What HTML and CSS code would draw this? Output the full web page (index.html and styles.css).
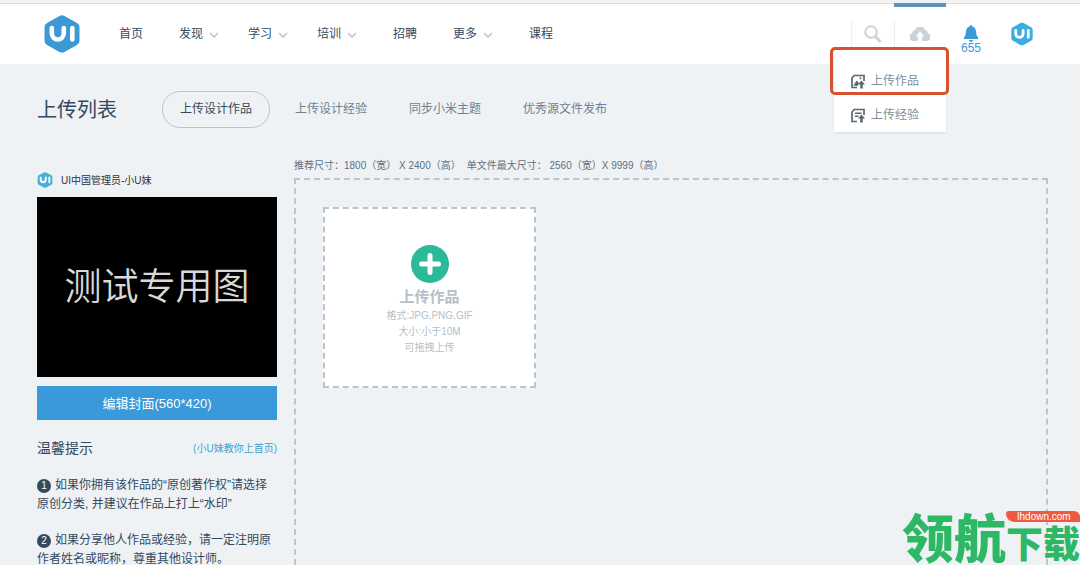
FILE: index.html
```html
<!DOCTYPE html>
<html lang="zh-CN">
<head>
<meta charset="utf-8">
<title>上传列表</title>
<link rel="stylesheet" href="styles.css">
</head>
<body>
<svg class="defs" aria-hidden="true">
  <symbol id="logo" viewBox="0 0 36 38">
    <path d="M15.500 1Q18 -.4 20.500 1L33 8Q35.500 9.400 35.500 12V26Q35.500 28.600 33 30L20.500 37Q18 38.400 15.500 37L3 30Q.5 28.600 .5 26V12Q.5 9.400 3 8L15.500 1Z" fill="currentColor"/>
    <path d="M7.800 13V18A6 6.500 0 0 0 19.800 18V13M28.300 13V24.500" fill="none" stroke="#fff" stroke-width="4.600" stroke-linecap="round"/>
  </symbol>
  <symbol id="chevron" viewBox="0 0 10 6"><path d="M1 1L5 5L9 1" fill="none" stroke="currentColor" stroke-width="1.600"/></symbol>
</svg>
<header class="header">
  <a class="logo" href="#" aria-label="UI中国"><svg><use href="#logo"/></svg></a>
  <nav class="nav">
    <a href="#">首页</a>
    <a class="more" href="#">发现<svg><use href="#chevron"/></svg></a>
    <a class="more" href="#">学习<svg><use href="#chevron"/></svg></a>
    <a class="more" href="#">培训<svg><use href="#chevron"/></svg></a>
    <a href="#">招聘</a>
    <a class="more" href="#">更多<svg><use href="#chevron"/></svg></a>
    <a href="#">课程</a>
  </nav>
  <div class="tools">
    <button class="tool" aria-label="搜索"><svg width="18" height="18" viewBox="0 0 18 18"><circle cx="7" cy="7" r="5.800" fill="none" stroke="currentColor" stroke-width="2"/><path d="M11.300 11.300L16.500 17" stroke="currentColor" stroke-width="2.800"/></svg></button>
    <div class="upload">
      <button class="tool active" aria-label="上传"><svg width="20" height="14" viewBox="0 0 20 14"><path d="M4 14A4 4 0 0 1 2.300 6.200A3.800 3.800 0 0 1 5.200 2.800A5 5 0 0 1 14.800 2.800A3.600 3.600 0 0 1 17.700 6.200A4 4 0 0 1 16 14H12V9.500H14.200L10 4L5.800 9.500H8V12.500L7 14Z" fill="currentColor"/></svg></button>
      <div class="menu">
        <a href="#"><svg width="14" height="15" viewBox="0 0 14 15"><path d="M6 13.500H1V4L3.200 1.500H13V7" fill="none" stroke="currentColor" stroke-width="1.700"/><path d="M2.500 11.500L5.500 6.500L8 9L6.500 12Z" fill="currentColor"/><circle cx="9.500" cy="4.300" r="1" fill="currentColor"/><path d="M10.500 6.500L14 10.500H11.800V14.500H9.200V10.500H7Z" fill="currentColor"/></svg>上传作品</a>
        <a href="#"><svg width="14" height="15" viewBox="0 0 14 15"><path d="M6 13.500H1V4L3.200 1.500H13V7" fill="none" stroke="currentColor" stroke-width="1.700"/><path d="M4 5.200H10.500M4 8.200H7.500" stroke="currentColor" stroke-width="1.400"/><path d="M10.500 6.500L14 10.500H11.800V14.500H9.200V10.500H7Z" fill="currentColor"/></svg>上传经验</a>
      </div>
      <div class="highlight"></div>
    </div>
    <a class="bell" href="#"><svg width="14" height="17" viewBox="0 0 14 17"><path d="M7 0Q8.200 0 8.400 1.500Q11.800 2.500 12 6.500Q12 10.500 14 12.500V14H0V12.500Q2 10.500 2 6.500Q2.200 2.500 5.600 1.500Q5.800 0 7 0ZM5 15H9Q8.500 17 7 17T5 15Z" fill="currentColor"/></svg>655</a>
    <a class="avatar" href="#" aria-label="个人主页"><svg><use href="#logo"/></svg></a>
  </div>
</header>
<main class="page">
  <div class="heading">
    <h1>上传列表</h1>
    <nav class="tabs">
      <a class="current" href="#">上传设计作品</a>
      <a href="#">上传设计经验</a>
      <a href="#">同步小米主题</a>
      <a href="#">优秀源文件发布</a>
    </nav>
  </div>
  <div class="columns">
    <aside class="side">
      <div class="user"><svg><use href="#logo"/></svg>UI中国管理员-小U妹</div>
      <div class="cover">测试专用图</div>
      <button class="edit">编辑封面(560*420)</button>
      <div class="tips-head"><h2>温馨提示</h2><a href="#">(小U妹教你上首页)</a></div>
      <p class="tip"><span class="num">1</span>如果你拥有该作品的“原创著作权”请选择原创分类, 并建议在作品上打上“水印”</p>
      <p class="tip"><span class="num">2</span>如果分享他人作品或经验，请一定注明原作者姓名或昵称，尊重其他设计师。</p>
    </aside>
    <section class="work">
      <p class="sizes"><span>推荐尺寸：1800（宽） X 2400（高）</span><span>单文件最大尺寸： 2560（宽）X 9999（高）</span></p>
      <div class="drop">
        <button class="add">
          <svg width="38" height="38" viewBox="0 0 38 38"><circle cx="19" cy="19" r="19" fill="#2ab999"/><path d="M19 10.500V27.500M10.500 19H27.500" stroke="#fff" stroke-width="5" stroke-linecap="round"/></svg>
          <strong>上传作品</strong>
          <span>格式:JPG,PNG,GIF</span>
          <span>大小:小于10M</span>
          <span>可拖拽上传</span>
        </button>
      </div>
    </section>
  </div>
</main>
<div class="mark"><span class="big">领航</span><span class="rest"><span class="tag">lhdown.com</span><span class="small">下载</span></span></div>
</body>
</html>
```
FILE: styles.css
```css
* { box-sizing: border-box; }
body {
  margin: 0;
  height: 100vh;
  overflow: hidden;
  display: flex;
  flex-direction: column;
  background: #eef2f5;
  color: #34495e;
  font: 12px/19px "Liberation Sans", "Noto Sans CJK SC", sans-serif;
}
a { color: inherit; text-decoration: none; }
button { border: 0; padding: 0; background: none; color: inherit; font: inherit; }
h1, h2, p { margin: 0; font-weight: 400; }
svg { display: block; flex: none; }
.defs { position: absolute; width: 0; height: 0; }

.header {
  flex: none;
  display: flex;
  align-items: center;
  height: 64px;
  padding: 3px 47px 0 44px;
  background: linear-gradient(#f2f2f2 3px, #dcdcdc 3px, #dcdcdc 4px, #fff 4px);
}
.logo { color: #3d98d6; }
.logo svg { width: 36px; height: 38px; }
.nav { display: flex; gap: 36px; padding: 2px 0 0 39px; flex: 1; }
.nav a { display: flex; align-items: center; gap: 6px; }
.nav .more + .more { margin-left: -7px; }
.nav svg { width: 10px; height: 6px; color: #bcc6cf; }
.tools { display: flex; align-self: stretch; color: #cbd3da; }
.tool {
  display: flex;
  align-items: center;
  justify-content: center;
  width: 43px;
  height: 61px;
  background: linear-gradient(#eceff1, #eceff1) 0 17px / 1px 28px no-repeat;
}
.upload { position: relative; width: 52px; }
.tool.active { width: 52px; border-top: 4px solid #5b95bf; padding-bottom: 4px; background-position: 0 13px; }
.menu {
  position: absolute;
  top: 45px;
  right: 0;
  width: 112px;
  padding: 15px 0 0;
  background: #fff;
  box-shadow: 0 1px 2px #d3d9de;
  color: #808f9c;
}
.menu a { display: flex; align-items: center; gap: 6px; height: 34px; padding: 2px 0 0 17px; }
.menu svg { color: #596776; }
.menu a:last-child { height: 35px; }
.highlight {
  position: absolute;
  top: 44px;
  right: -3px;
  width: 119px;
  height: 48px;
  border: 3px solid #d9512f;
  border-radius: 5px;
}
.bell { width: 50px; padding-top: 22px; display: flex; flex-direction: column; align-items: center; color: #3d98d6; line-height: 13px; }
.avatar { align-self: center; margin-left: 15px; color: #3aaee0; }
.avatar svg { width: 22px; height: 24px; }

.page { flex: 1; display: flex; flex-direction: column; padding: 0 32px 0 37px; min-height: 0; }
.heading { display: flex; align-items: center; padding-top: 27px; gap: 45px; }
.heading h1 { font-size: 20px; line-height: 36px; }
.tabs { display: flex; align-items: center; gap: 42px; color: #708090; }
.tabs .current { padding: 8px 17px; border: 1px solid #b4c4d4; border-radius: 18px; color: #34495e; margin-right: -17px; }
.columns { flex: 1; display: flex; gap: 17px; padding-top: 28px; min-height: 0; }
.side { width: 240px; flex: none; }
.user { display: flex; align-items: center; gap: 8px; height: 16px; margin-top: 16px; color: #333; font-size: 10px; }
.user svg { width: 16px; height: 16px; color: #45afd8; }
.cover { margin-top: 9px; height: 180px; background: #000; color: #d8d8d8; font-size: 37px; font-weight: 350; line-height: 182px; text-align: center; }
.edit { display: block; width: 100%; height: 34px; margin-top: 9px; background: #3a99d8; color: #fff; font-size: 13px; }
.tips-head { display: flex; align-items: center; justify-content: space-between; margin: 18px 0; }
.tips-head h2 { font-size: 14px; line-height: 20px; }
.tips-head a { color: #45a0cc; font-size: 10px; }
.tip { margin-bottom: 17px; }
.num { display: inline-block; width: 14px; height: 14px; margin-right: 4px; border-radius: 50%; background: #34495e; color: #fff; font-size: 10px; line-height: 14px; text-align: center; }
.work { flex: 1; display: flex; flex-direction: column; }
.sizes { display: flex; gap: 6px; font-size: 10px; line-height: 20px; color: #5d7080; }
.drop { flex: 1; margin-top: 2px; padding: 27px; border: 2px dashed #bcc4cd; border-bottom: 0; }
.add { display: flex; flex-direction: column; align-items: center; justify-content: center; width: 213px; height: 181px; padding-top: 6px; background: #fff; border: 2px dashed #bcc4cd; color: #b5c0ca; font-size: 10px; line-height: 16px; }
.add strong { margin: 3px 0 0; font-size: 15px; line-height: 22px; }

.mark { position: absolute; right: 0; bottom: 0; display: flex; color: #2eb765; font-family: "Noto Sans CJK SC", sans-serif; font-weight: 900; }
.big { font-size: 52px; line-height: 58px; }
.rest { display: flex; flex-direction: column; }
.tag { margin-top: 4px; padding-left: 2px; border-radius: 4px 9px 0 12px; background: #f0593e; color: #fff; font: 10px/11px "Liberation Sans", sans-serif; text-align: center; }
.small { font-size: 37px; line-height: 41px; }
```
